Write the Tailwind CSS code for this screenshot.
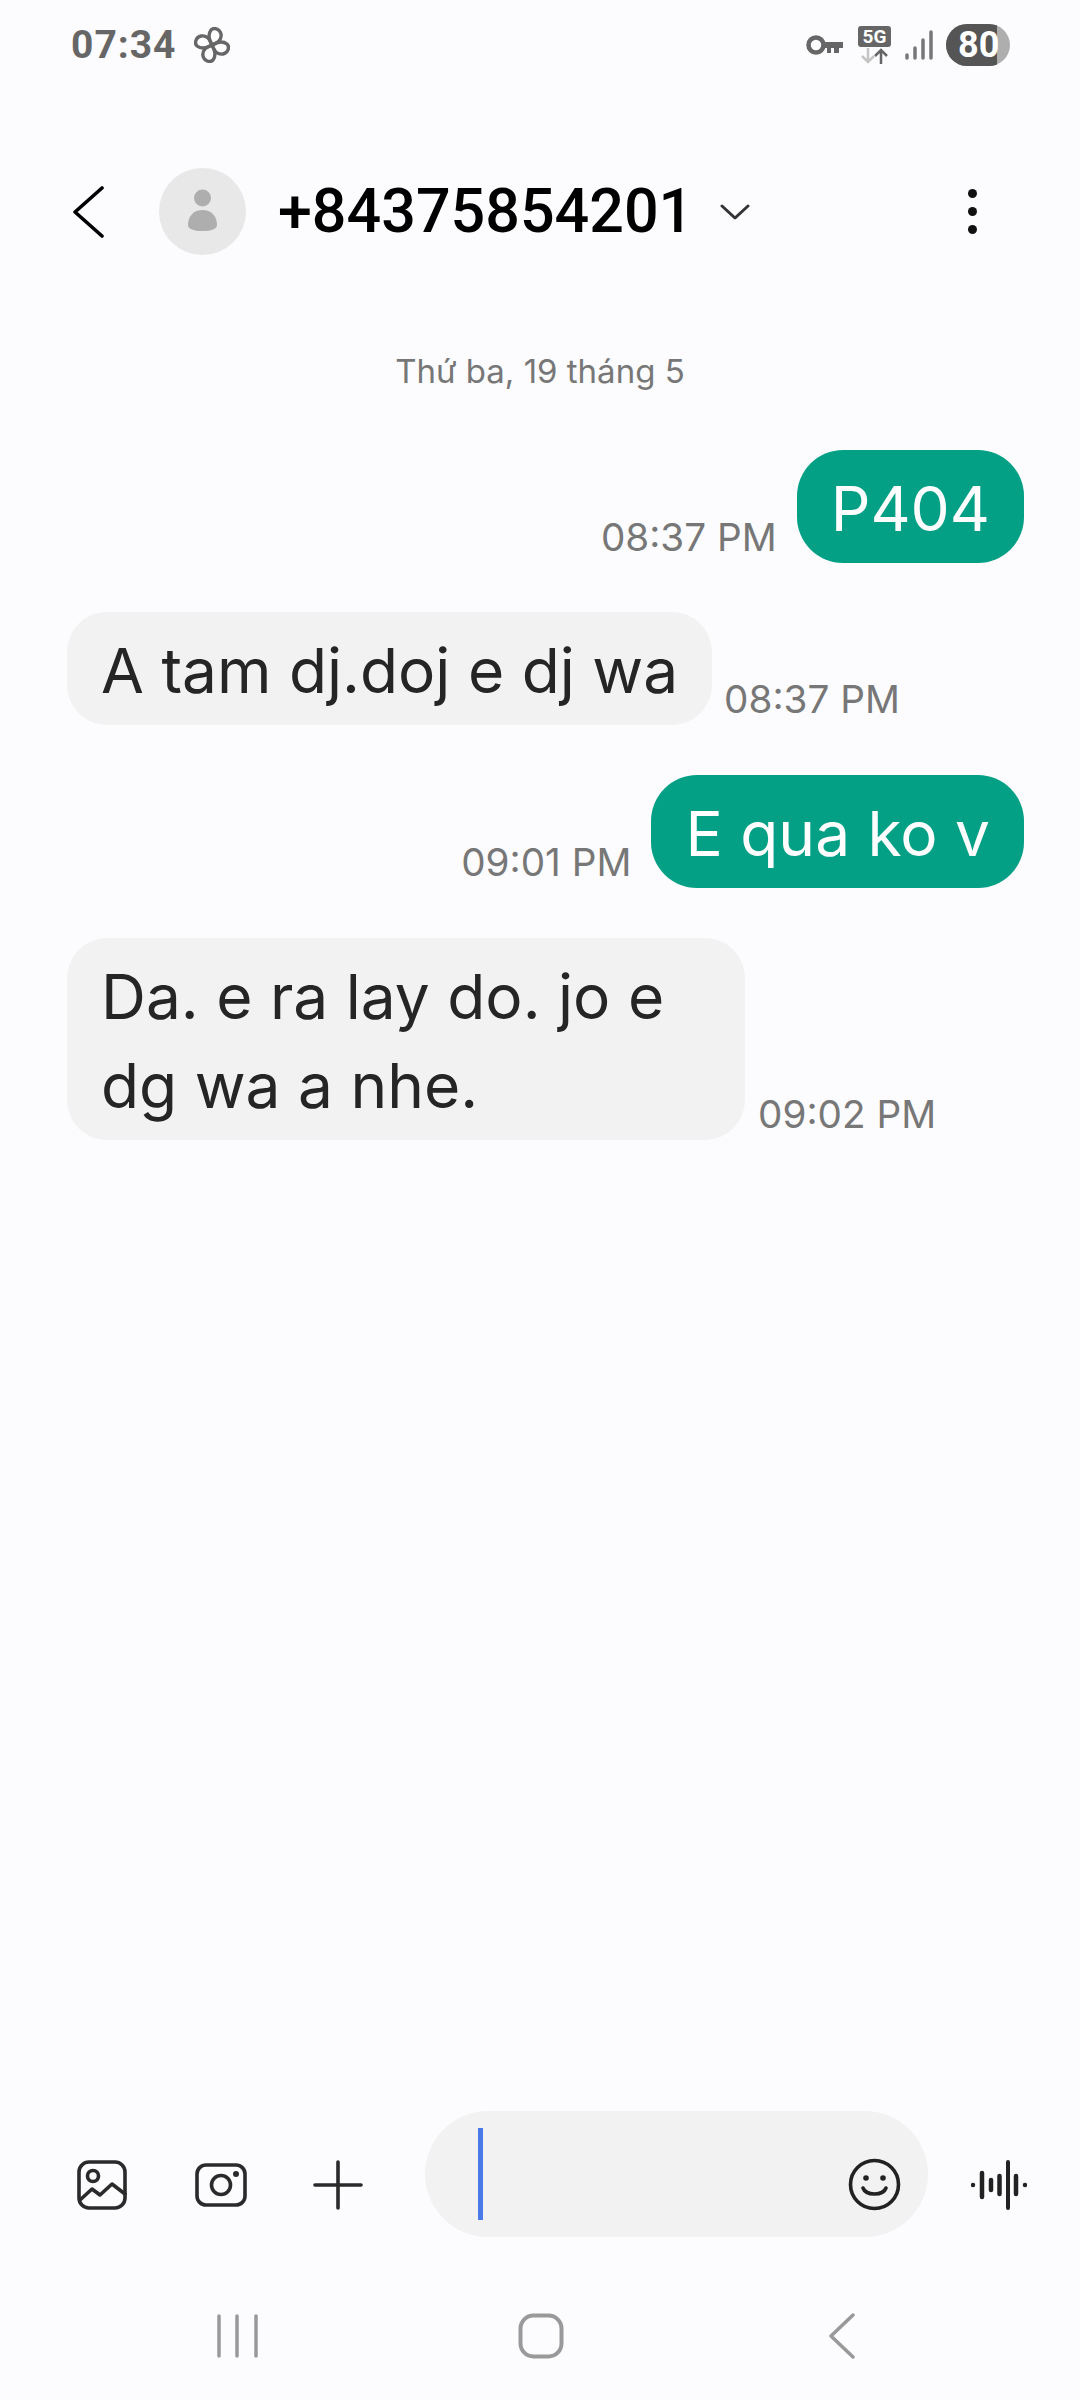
<!doctype html>
<html><head><meta charset="utf-8"><script src="https://cdn.jsdelivr.net/npm/@tailwindcss/browser@4"></script></head>
<body class="m-0">
<div class="w-[1080px] h-[2400px] bg-[#fcfcfe] flex flex-col overflow-hidden font-['Roboto',sans-serif]">
  <!-- status bar -->
  <div class="h-[90px] flex items-center pl-[71px] pr-[70px] text-[#666]">
    <span class="text-[39px] font-bold leading-none tracking-[1px]">07:34</span>
    <svg class="ml-[17px]" width="36" height="36" viewBox="0 0 36 36" fill="none" stroke="#666" stroke-width="3.400" stroke-linejoin="round"><path d="M18 18C15 13 14 7 17 3C20 0 26 2 27 7C28 12 24 16 18 18Z"/><path d="M18 18C15 13 14 7 17 3C20 0 26 2 27 7C28 12 24 16 18 18Z" transform="rotate(90 18 18)"/><path d="M18 18C15 13 14 7 17 3C20 0 26 2 27 7C28 12 24 16 18 18Z" transform="rotate(180 18 18)"/><path d="M18 18C15 13 14 7 17 3C20 0 26 2 27 7C28 12 24 16 18 18Z" transform="rotate(270 18 18)"/></svg>
    <div class="ml-auto flex items-center">
      <svg width="37" height="22" viewBox="0 0 37 22" fill="none"><circle cx="10" cy="11" r="7.500" stroke="#666" stroke-width="4.500"/><path d="M17 8H37V14H33V19H28V14H25V19H21V14H17Z" fill="#666"/></svg>
      <div class="ml-[15px] w-[33px] h-[38px] relative">
        <div class="absolute left-0 top-0 w-[33px] h-[21px] bg-[#666] rounded-[3px] text-white text-[19px] font-bold leading-[21px] text-center">5G</div>
        <svg class="absolute left-0 top-[22px]" width="33" height="16" viewBox="0 0 33 16" fill="none" stroke-width="2.500"><path d="M10 0V14M4 8L10 14L16 8" stroke="#c4c4c4"/><path d="M23 16V2M17 8L23 2L29 8" stroke="#666"/></svg>
      </div>
      <svg class="ml-[14px]" width="28" height="30" viewBox="0 0 28 30" stroke="#777" stroke-width="3.500" stroke-linecap="round"><path d="M2 28V25M10 28V18M18 28V10M26 28V2"/></svg>
      <div class="ml-[13px] relative w-[64px] h-[42px] rounded-[21px] bg-[#aeaeae] overflow-hidden">
        <div class="absolute left-0 top-0 w-[51px] h-[42px] bg-[#555]"></div>
        <span class="absolute left-[12px] top-0 text-white text-[36px] font-bold leading-[42px]">80</span>
      </div>
    </div>
  </div>
  <!-- header -->
  <div class="mt-[78px] h-[87px] flex items-center text-black">
    <svg class="ml-[72px]" width="32" height="52" viewBox="0 0 32 52" fill="none" stroke="#000" stroke-width="3.600" stroke-linecap="round" stroke-linejoin="round"><path d="M30 2L3 26L30 50"/></svg>
    <div class="ml-[55px] w-[87px] h-[87px] rounded-full bg-[#e8e8e8] relative shrink-0">
      <svg class="absolute left-[28px] top-[21px]" width="31" height="44" viewBox="0 0 31 44" fill="#aeaeae"><ellipse cx="15.500" cy="9" rx="8.500" ry="8.500"/><path d="M1 36C1 27 7 21 15.500 21C24 21 30 27 30 36C30 40 24 42 15.500 42C7 42 1 40 1 36Z"/></svg>
    </div>
    <span class="ml-[32px] text-[61px] font-medium leading-none">+84375854201</span>
    <svg class="ml-[27px]" width="30" height="16" viewBox="0 0 30 16" fill="none" stroke="#333" stroke-width="3" stroke-linecap="round" stroke-linejoin="round"><path d="M2 2L15 14L28 2"/></svg>
    <div class="ml-auto mr-[103px] flex flex-col gap-[9px]">
      <div class="w-[9px] h-[9px] rounded-full bg-[#111]"></div>
      <div class="w-[9px] h-[9px] rounded-full bg-[#111]"></div>
      <div class="w-[9px] h-[9px] rounded-full bg-[#111]"></div>
    </div>
  </div>
  <!-- date -->
  <div class="mt-[96px] h-[40px] text-center text-[33px] leading-[40px] text-[#777] font-['Inter',sans-serif]">Thứ ba, 19 tháng 5</div>
  <!-- messages -->
  <div class="mt-[59px] flex-1 pl-[67px] pr-[56px] flex flex-col text-[62.2px] leading-[89px] font-['Inter',sans-serif]">
    <div class="flex justify-end items-end gap-[20px]">
      <span class="text-[38.700px] leading-[46px] text-[#777] mb-[3px]">08:37 PM</span>
      <div class="bg-[#04a086] text-[#fdfdfd] rounded-[46px] px-[34px] pt-[14px] pb-[10px]">P404</div>
    </div>
    <div class="mt-[49px] flex items-end gap-[12px]">
      <div class="bg-[#f2f2f2] text-[#252525] rounded-[40px] px-[34px] pt-[14px] pb-[10px]">A tam dj.doj e dj wa</div>
      <span class="text-[38.700px] leading-[46px] text-[#777] mb-[3px]">08:37 PM</span>
    </div>
    <div class="mt-[50px] flex justify-end items-end gap-[20px]">
      <span class="text-[38.700px] leading-[46px] text-[#777] mb-[3px]">09:01 PM</span>
      <div class="bg-[#04a086] text-[#fdfdfd] rounded-[46px] px-[34px] pt-[14px] pb-[10px]">E qua ko v</div>
    </div>
    <div class="mt-[50px] flex items-end gap-[13px]">
      <div class="w-[678px] bg-[#f2f2f2] text-[#252525] rounded-[40px] px-[34px] pt-[14px] pb-[10px]">Da. e ra lay do. jo e<br>dg wa a nhe.</div>
      <span class="text-[38.700px] leading-[46px] text-[#777] mb-[3px]">09:02 PM</span>
    </div>
  </div>
  <!-- composer -->
  <div class="h-[126px] flex items-center">
    <svg class="ml-[77px] mt-[21px]" width="50" height="50" viewBox="0 0 50 50" fill="none" stroke="#2a2a2a" stroke-width="3.600" stroke-linejoin="round" stroke-linecap="round"><rect x="2" y="2" width="46" height="46" rx="10"/><circle cx="16" cy="16" r="5.500"/><path d="M3 40L15 29L23 35L35 24L48 34"/></svg>
    <svg class="ml-[68px] mt-[21px]" width="52" height="44" viewBox="0 0 52 44" fill="none" stroke="#2a2a2a" stroke-width="3.600"><rect x="2" y="2" width="48" height="40" rx="9"/><circle cx="26" cy="22" r="9.500"/><circle cx="41" cy="11" r="3" fill="#2a2a2a" stroke="none"/></svg>
    <svg class="ml-[66px] mt-[21px]" width="50" height="50" viewBox="0 0 50 50" fill="none" stroke="#2a2a2a" stroke-width="3.600" stroke-linecap="round"><path d="M25 2V48M2 25H48"/></svg>
    <div class="ml-[62px] w-[503px] h-[126px] rounded-[63px] bg-[#f2f2f2] relative flex items-center">
      <div class="ml-[53px] w-[5px] h-[92px] bg-[#4a7ae8]"></div>
      <svg class="ml-auto mr-[27px] mt-[21px]" width="53" height="53" viewBox="0 0 53 53" fill="none" stroke="#222" stroke-width="3.600" stroke-linecap="round"><circle cx="26.500" cy="26.500" r="24"/><path d="M15 30C18 38 35 38 38 30"/><circle cx="18" cy="20" r="2.800" fill="#222" stroke="none"/><circle cx="35" cy="20" r="2.800" fill="#222" stroke="none"/></svg>
    </div>
    <svg class="ml-[43px] mt-[21px]" width="56" height="50" viewBox="0 0 56 50" fill="none" stroke="#222" stroke-linecap="round"><path d="M2 25V25.100" stroke-width="4.500"/><path d="M11 13V37" stroke-width="4.500"/><path d="M20 20V30" stroke-width="4.500"/><path d="M28.500 16V34" stroke-width="4.500"/><path d="M37 2V48" stroke-width="4"/><path d="M45 16V34" stroke-width="4.500"/><path d="M54 25V25.100" stroke-width="4.500"/></svg>
  </div>
  <!-- nav -->
  <div class="h-[163px] pt-[76px] relative">
    <div class="flex items-start text-[#999]">
      <svg class="ml-[217px]" width="42" height="45" viewBox="0 0 42 45" fill="none" stroke="#999" stroke-width="3.500" stroke-linecap="round"><path d="M2 3V43M20 3V43M39 3V43"/></svg>
      <svg class="ml-[259px]" width="46" height="46" viewBox="0 0 46 46" fill="none" stroke="#999" stroke-width="4"><rect x="2.500" y="2.500" width="41" height="41" rx="13"/></svg>
      <svg class="ml-[264px]" width="28" height="46" viewBox="0 0 28 46" fill="none" stroke="#999" stroke-width="3.500" stroke-linecap="round" stroke-linejoin="round"><path d="M25 2L3 23L25 44"/></svg>
    </div>
  </div>
</div>
</body></html>
